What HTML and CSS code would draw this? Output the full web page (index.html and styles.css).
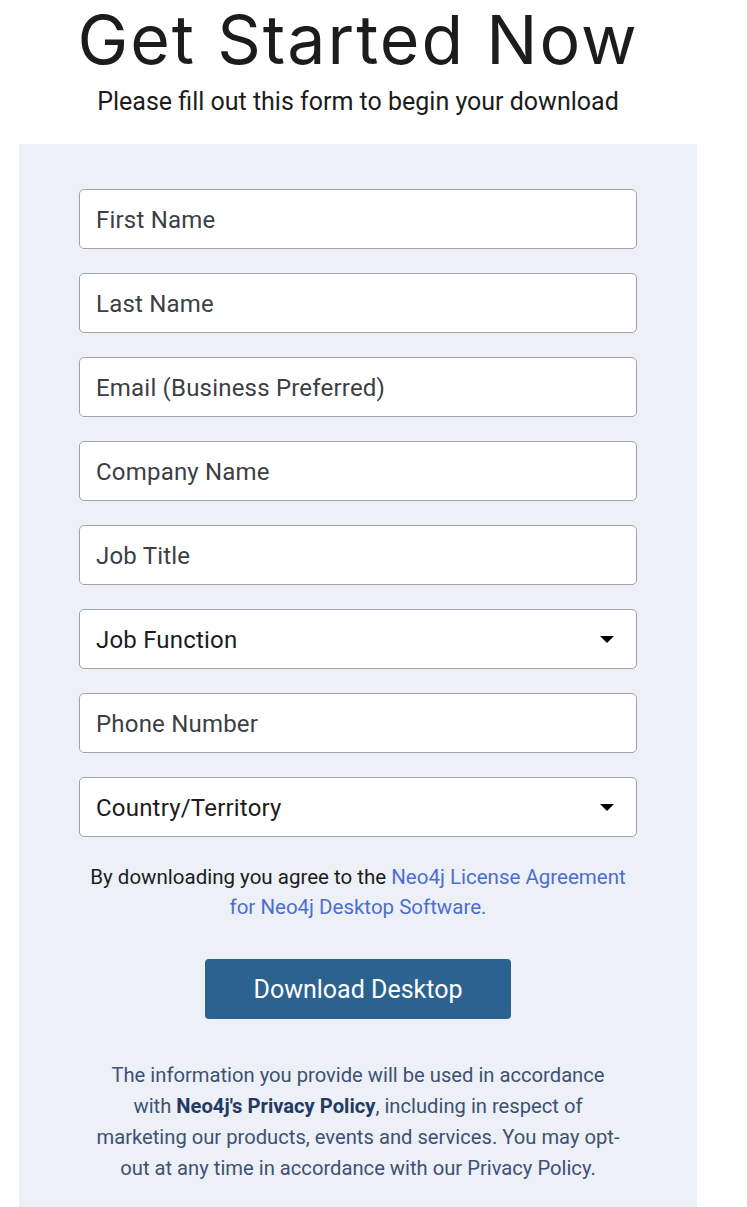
FILE: index.html
```html
<!DOCTYPE html>
<html lang="en">
<head>
<meta charset="utf-8">
<title>Get Started Now</title>
<link rel="stylesheet" href="styles.css">
</head>
<body>
<div class="wrap">
  <header class="hero">
    <h1 class="title">Get Started Now</h1>
    <p class="subtitle">Please fill out this form to begin your download</p>
  </header>
  <section class="panel">
    <form class="form">
      <div class="field"><span class="ph">First Name</span></div>
      <div class="field"><span class="ph">Last Name</span></div>
      <div class="field"><span class="ph">Email (Business Preferred)</span></div>
      <div class="field"><span class="ph">Company Name</span></div>
      <div class="field"><span class="ph">Job Title</span></div>
      <div class="field select"><span class="val">Job Function</span><span class="caret"></span></div>
      <div class="field"><span class="ph">Phone Number</span></div>
      <div class="field select"><span class="val">Country/Territory</span><span class="caret"></span></div>
    </form>
    <p class="agree">By downloading you agree to the <a class="link" href="#">Neo4j License Agreement<br>for Neo4j Desktop Software.</a></p>
    <div class="btn-row"><button class="btn" type="button">Download Desktop</button></div>
    <p class="privacy">The information you provide will be used in accordance<br>with <strong>Neo4j's Privacy Policy</strong>, including in respect of<br>marketing our products, events and services. You may opt-<br>out at any time in accordance with our Privacy Policy.</p>
  </section>
</div>
</body>
</html>
```
FILE: styles.css
```css
html, body { margin: 0; padding: 0; background: #fff; }
body { font-family: Roboto, "Liberation Sans", sans-serif; color: #1a1a1a; }
.wrap { width: 678px; margin-left: 19px; }
.hero { text-align: center; }
.title {
  margin: 0;
  padding-top: 1px;
  font-family: Inter, "Liberation Sans", sans-serif;
  font-weight: 400;
  font-size: 68px;
  line-height: 76px;
  letter-spacing: 2px;
  color: #1c1c1c;
}
.subtitle {
  margin: 10px 0 0;
  font-size: 25px;
  line-height: 30px;
  color: #1c1c1c;
}
.panel {
  margin-top: 27px;
  background: #edf0f7;
  padding: 45px 60px 28px;
  min-height: 1040px;
  box-sizing: border-box;
}
.form { display: flex; flex-direction: column; gap: 24px; }
.field {
  height: 60px;
  box-sizing: border-box;
  background: #fff;
  border: 1px solid #9ea3ab;
  border-radius: 5px;
  display: flex;
  align-items: center;
  padding: 1px 16px 0;
  font-size: 24px;
  letter-spacing: 0.2px;
}
.ph { color: #3b3f44; }
.val { color: #1c1c1c; flex: 1; }
.caret {
  width: 0; height: 0;
  border-left: 7px solid transparent;
  border-right: 7px solid transparent;
  border-top: 7px solid #000;
  margin-right: 6px;
}
.agree {
  margin: 25px 0 0;
  text-align: center;
  font-size: 20.5px;
  line-height: 30px;
  color: #1c1c1c;
}
.link { color: #4b6fd0; text-decoration: none; }
.btn-row { display: flex; justify-content: center; margin-top: 37px; }
.btn {
  width: 306px;
  height: 60px;
  border: 0;
  border-radius: 4px;
  background: #2c6290;
  color: #fff;
  font-family: Roboto, "Liberation Sans", sans-serif;
  font-size: 25px;
}
.privacy {
  margin: 41px 0 0;
  text-align: center;
  font-size: 20.2px;
  line-height: 31px;
  color: #3d5273;
}
.privacy strong { color: #233a63; font-weight: 700; }
```
